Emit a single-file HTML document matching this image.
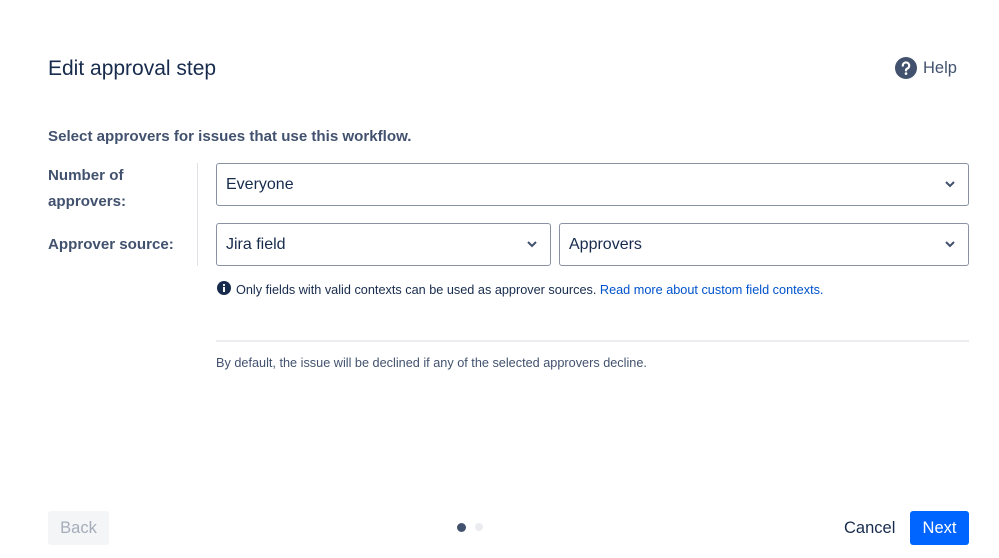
<!DOCTYPE html>
<html><head><style>
*{box-sizing:border-box;margin:0;padding:0}
body{width:999px;height:558px;background:#fff;font-family:"Liberation Sans",sans-serif;color:#172b4d;position:relative;overflow:hidden}
.a{position:absolute;white-space:nowrap}
.sel{position:absolute;border:1px solid #8993a4;border-radius:3px;height:43px;font-size:16px;padding:0 0 0 9px;line-height:41px;color:#172b4d}
.sel svg{position:absolute;right:13px;top:16px}
</style></head><body>
<div class="a" style="left:48px;top:57px;font-size:21px;color:#172b4d">Edit approval step</div>
<svg class="a" style="left:895px;top:57px" width="22" height="22" viewBox="0 0 22 22"><circle cx="11" cy="11" r="11" fill="#42526e"/><path d="M7.8 8.6a3.2 3.2 0 1 1 4.4 3c-.9.4-1.2.9-1.2 1.8" stroke="#fff" stroke-width="2.2" fill="none" stroke-linecap="round"/><circle cx="11" cy="16.6" r="1.3" fill="#fff"/></svg>
<div class="a" style="left:923px;top:59px;font-size:16.5px;color:#42526e">Help</div>
<div class="a" style="left:48px;top:128px;font-size:15.1px;font-weight:bold;color:#42526e">Select approvers for issues that use this workflow.</div>
<div class="a" style="left:48px;top:163px;font-size:15.1px;font-weight:bold;color:#42526e;line-height:26px">Number of<br>approvers:</div>
<div class="a" style="left:48px;top:236px;font-size:15.1px;font-weight:bold;color:#42526e">Approver source:</div>
<div class="a" style="left:197px;top:163px;width:1px;height:103px;background:#dfe1e6"></div>
<div class="sel" style="left:216px;top:163px;width:753px">Everyone<svg width="10" height="8" viewBox="0 0 10 8"><path d="M1 2l4 4 4-4" stroke="#42526e" stroke-width="2" fill="none"/></svg></div>
<div class="sel" style="left:216px;top:223px;width:335px">Jira field<svg width="10" height="8" viewBox="0 0 10 8"><path d="M1 2l4 4 4-4" stroke="#42526e" stroke-width="2" fill="none"/></svg></div>
<div class="sel" style="left:559px;top:223px;width:410px">Approvers<svg width="10" height="8" viewBox="0 0 10 8"><path d="M1 2l4 4 4-4" stroke="#42526e" stroke-width="2" fill="none"/></svg></div>
<svg class="a" style="left:217px;top:281px" width="14" height="14" viewBox="0 0 14 14"><circle cx="7" cy="7" r="7" fill="#172b4d"/><rect x="6" y="6" width="2" height="5" fill="#fff"/><circle cx="7" cy="4" r="1.1" fill="#fff"/></svg>
<div class="a" style="left:236px;top:283px;font-size:12.7px;color:#172b4d">Only fields with valid contexts can be used as approver sources. <span style="color:#0052cc">Read more about custom field contexts.</span></div>
<div class="a" style="left:216px;top:340px;width:753px;height:2px;background:#ebecf0"></div>
<div class="a" style="left:216px;top:356px;font-size:12.7px;color:#42526e">By default, the issue will be declined if any of the selected approvers decline.</div>
<div class="a" style="left:48px;top:511px;width:61px;height:34px;background:#f4f5f7;border-radius:3px;color:#a5adba;font-size:16.5px;text-align:center;line-height:34px">Back</div>
<div class="a" style="left:457px;top:523px;width:9px;height:9px;border-radius:50%;background:#42526e"></div>
<div class="a" style="left:475px;top:523px;width:8px;height:8px;border-radius:50%;background:#ebecf0"></div>
<div class="a" style="left:844px;top:519px;font-size:16.5px;color:#172b4d">Cancel</div>
<div class="a" style="left:910px;top:511px;width:59px;height:34px;background:#0065ff;border-radius:3px;color:#fff;font-size:16.5px;text-align:center;line-height:34px">Next</div>
</body></html>
